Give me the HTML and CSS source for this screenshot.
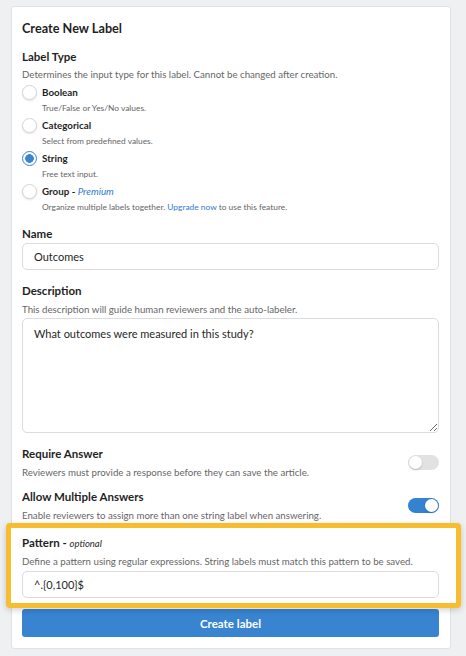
FILE: index.html
```html
<!DOCTYPE html>
<html lang="en">

<head>
	<meta charset="utf-8" />
	<meta name="viewport" content="width=device-width, initial-scale=1.0" />
	<title>Create New Label</title>
	<link rel="stylesheet" href="styles.css">
</head>

<body>
	<div class="page">
		<form class="card">
			<h1 class="title">Create New Label</h1>

			<div class="field-label type-label">Label Type</div>
			<div class="hint">Determines the input type for this label. Cannot be changed after creation.</div>

			<div class="options">
				<label class="option">
					<span class="radio"></span>
					<span class="option-body">
						<span class="option-name">Boolean</span>
						<span class="option-hint">True/False or Yes/No values.</span>
					</span>
				</label>
				<label class="option">
					<span class="radio"></span>
					<span class="option-body">
						<span class="option-name">Categorical</span>
						<span class="option-hint">Select from predefined values.</span>
					</span>
				</label>
				<label class="option">
					<span class="radio checked"></span>
					<span class="option-body">
						<span class="option-name">String</span>
						<span class="option-hint">Free text input.</span>
					</span>
				</label>
				<label class="option">
					<span class="radio"></span>
					<span class="option-body">
						<span class="option-name">Group - <em class="premium">Premium</em></span>
						<span class="option-hint">Organize multiple labels together. <a class="link">Upgrade now</a> to use this feature.</span>
					</span>
				</label>
			</div>

			<div class="field-label name-label">Name</div>
			<input class="text-input" value="Outcomes">

			<div class="field-label desc-label">Description</div>
			<div class="hint desc-hint">This description will guide human reviewers and the auto-labeler.</div>
			<textarea class="text-area">What outcomes were measured in this study?</textarea>

			<div class="switch-row first-switch">
				<div>
					<div class="field-label">Require Answer</div>
					<div class="hint switch-hint">Reviewers must provide a response before they can save the article.</div>
				</div>
				<span class="toggle"></span>
			</div>

			<div class="switch-row second-switch">
				<div>
					<div class="field-label">Allow Multiple Answers</div>
					<div class="hint switch-hint">Enable reviewers to assign more than one string label when answering.</div>
				</div>
				<span class="toggle on"></span>
			</div>

			<div class="highlight">
				<div class="field-label">Pattern - <em class="optional">optional</em></div>
				<div class="hint pattern-hint">Define a pattern using regular expressions. String labels must match this pattern to be saved.</div>
				<input class="text-input pattern-input" value="^.{0,100}$">
			</div>

			<button type="button" class="submit">Create label</button>
		</form>
	</div>
</body>

</html>
```

FILE: styles.css
```css
body {
	margin: 0;
	background: #eff0f2;
	font-family: Lato, "Noto Sans", sans-serif;
	color: #1f1f1f;
}

.page {
	padding: 6px 15px 8px 11px;
}

.card {
	display: flex;
	flex-direction: column;
	background: #fff;
	border: 1px solid #e1e2e5;
	border-radius: 3px;
	padding: 11px 11px 11px 10px;
}

.title {
	margin: 0;
	font-size: 12.7px;
	line-height: 20px;
	font-weight: 700;
}

.field-label {
	font-size: 11.5px;
	line-height: 16px;
	font-weight: 700;
}

.type-label {
	margin-top: 11px;
}

.hint {
	font-size: 9.7px;
	line-height: 14px;
	color: #666;
	margin-top: 2px;
}

.options {
	display: flex;
	flex-direction: column;
	gap: 4px;
	margin-top: 4px;
}

.option {
	display: flex;
	gap: 5px;
}

.radio {
	flex: none;
	box-sizing: border-box;
	width: 15px;
	height: 15px;
	border-radius: 50%;
	border: 1px solid #d6d6d6;
	box-shadow: 0 1px 2px rgba(0, 0, 0, 0.12);
	background: #fff;
}

.radio.checked {
	border: 1.5px solid #3a84d0;
	background: radial-gradient(circle, #3a84d0 0 4px, #fff 4.6px);
	box-shadow: none;
}

.option-body {
	display: flex;
	flex-direction: column;
	gap: 3px;
}

.option-name {
	font-size: 9.8px;
	line-height: 14px;
	font-weight: 700;
}

.premium {
	font-weight: 400;
	color: #2f7bd0;
}

.option-hint {
	font-size: 8.4px;
	line-height: 12px;
	color: #666;
}

.link {
	color: #2f7bd0;
}

.name-label {
	margin-top: 13px;
}

.text-input {
	box-sizing: border-box;
	width: 100%;
	height: 27px;
	margin-top: 1px;
	padding: 0 11px;
	border: 1px solid #dcdcdc;
	border-radius: 5px;
	font-family: inherit;
	font-size: 11px;
	color: #1f1f1f;
	outline: none;
}

.desc-label {
	margin-top: 13px;
}

.desc-hint {
	margin-top: 3px;
}

.text-area {
	box-sizing: border-box;
	width: 100%;
	height: 115px;
	margin-top: 2px;
	padding: 8px 11px;
	border: 1px solid #dcdcdc;
	border-radius: 5px;
	font-family: inherit;
	font-size: 11px;
	color: #1f1f1f;
	outline: none;
	resize: vertical;
}

.switch-row {
	display: flex;
	justify-content: space-between;
	align-items: center;
}

.first-switch {
	margin-top: 13px;
}

.second-switch {
	margin-top: 10px;
}

.switch-hint {
	margin-top: 3px;
}

.toggle {
	flex: none;
	position: relative;
	width: 31px;
	height: 15px;
	border-radius: 8px;
	background: #e2e2e2;
}

.toggle::after {
	content: "";
	position: absolute;
	top: 1px;
	left: 1px;
	width: 13px;
	height: 13px;
	border-radius: 50%;
	background: #fff;
	box-shadow: 0 1px 2px rgba(0, 0, 0, 0.2);
}

.toggle.on {
	background: #3582d2;
}

.toggle.on::after {
	left: 17px;
}

.highlight {
	position: relative;
	z-index: 1;
	margin: 1px -22px 0 -16px;
	padding: 7px 17px 5px 11px;
	border: 5px solid #f8bc2f;
	border-radius: 4px;
	background: #fff;
	box-shadow: 0 2px 6px rgba(0, 0, 0, 0.18);
}

.optional {
	font-size: 9.5px;
	font-weight: 400;
}

.pattern-hint {
	margin-top: 2px;
}

.pattern-input {
	margin-top: 3px;
}

.submit {
	height: 28px;
	margin-top: 1px;
	border: none;
	border-radius: 3px;
	background: #3884d0;
	color: #fff;
	font-family: inherit;
	font-size: 11.5px;
	font-weight: 700;
}
```
